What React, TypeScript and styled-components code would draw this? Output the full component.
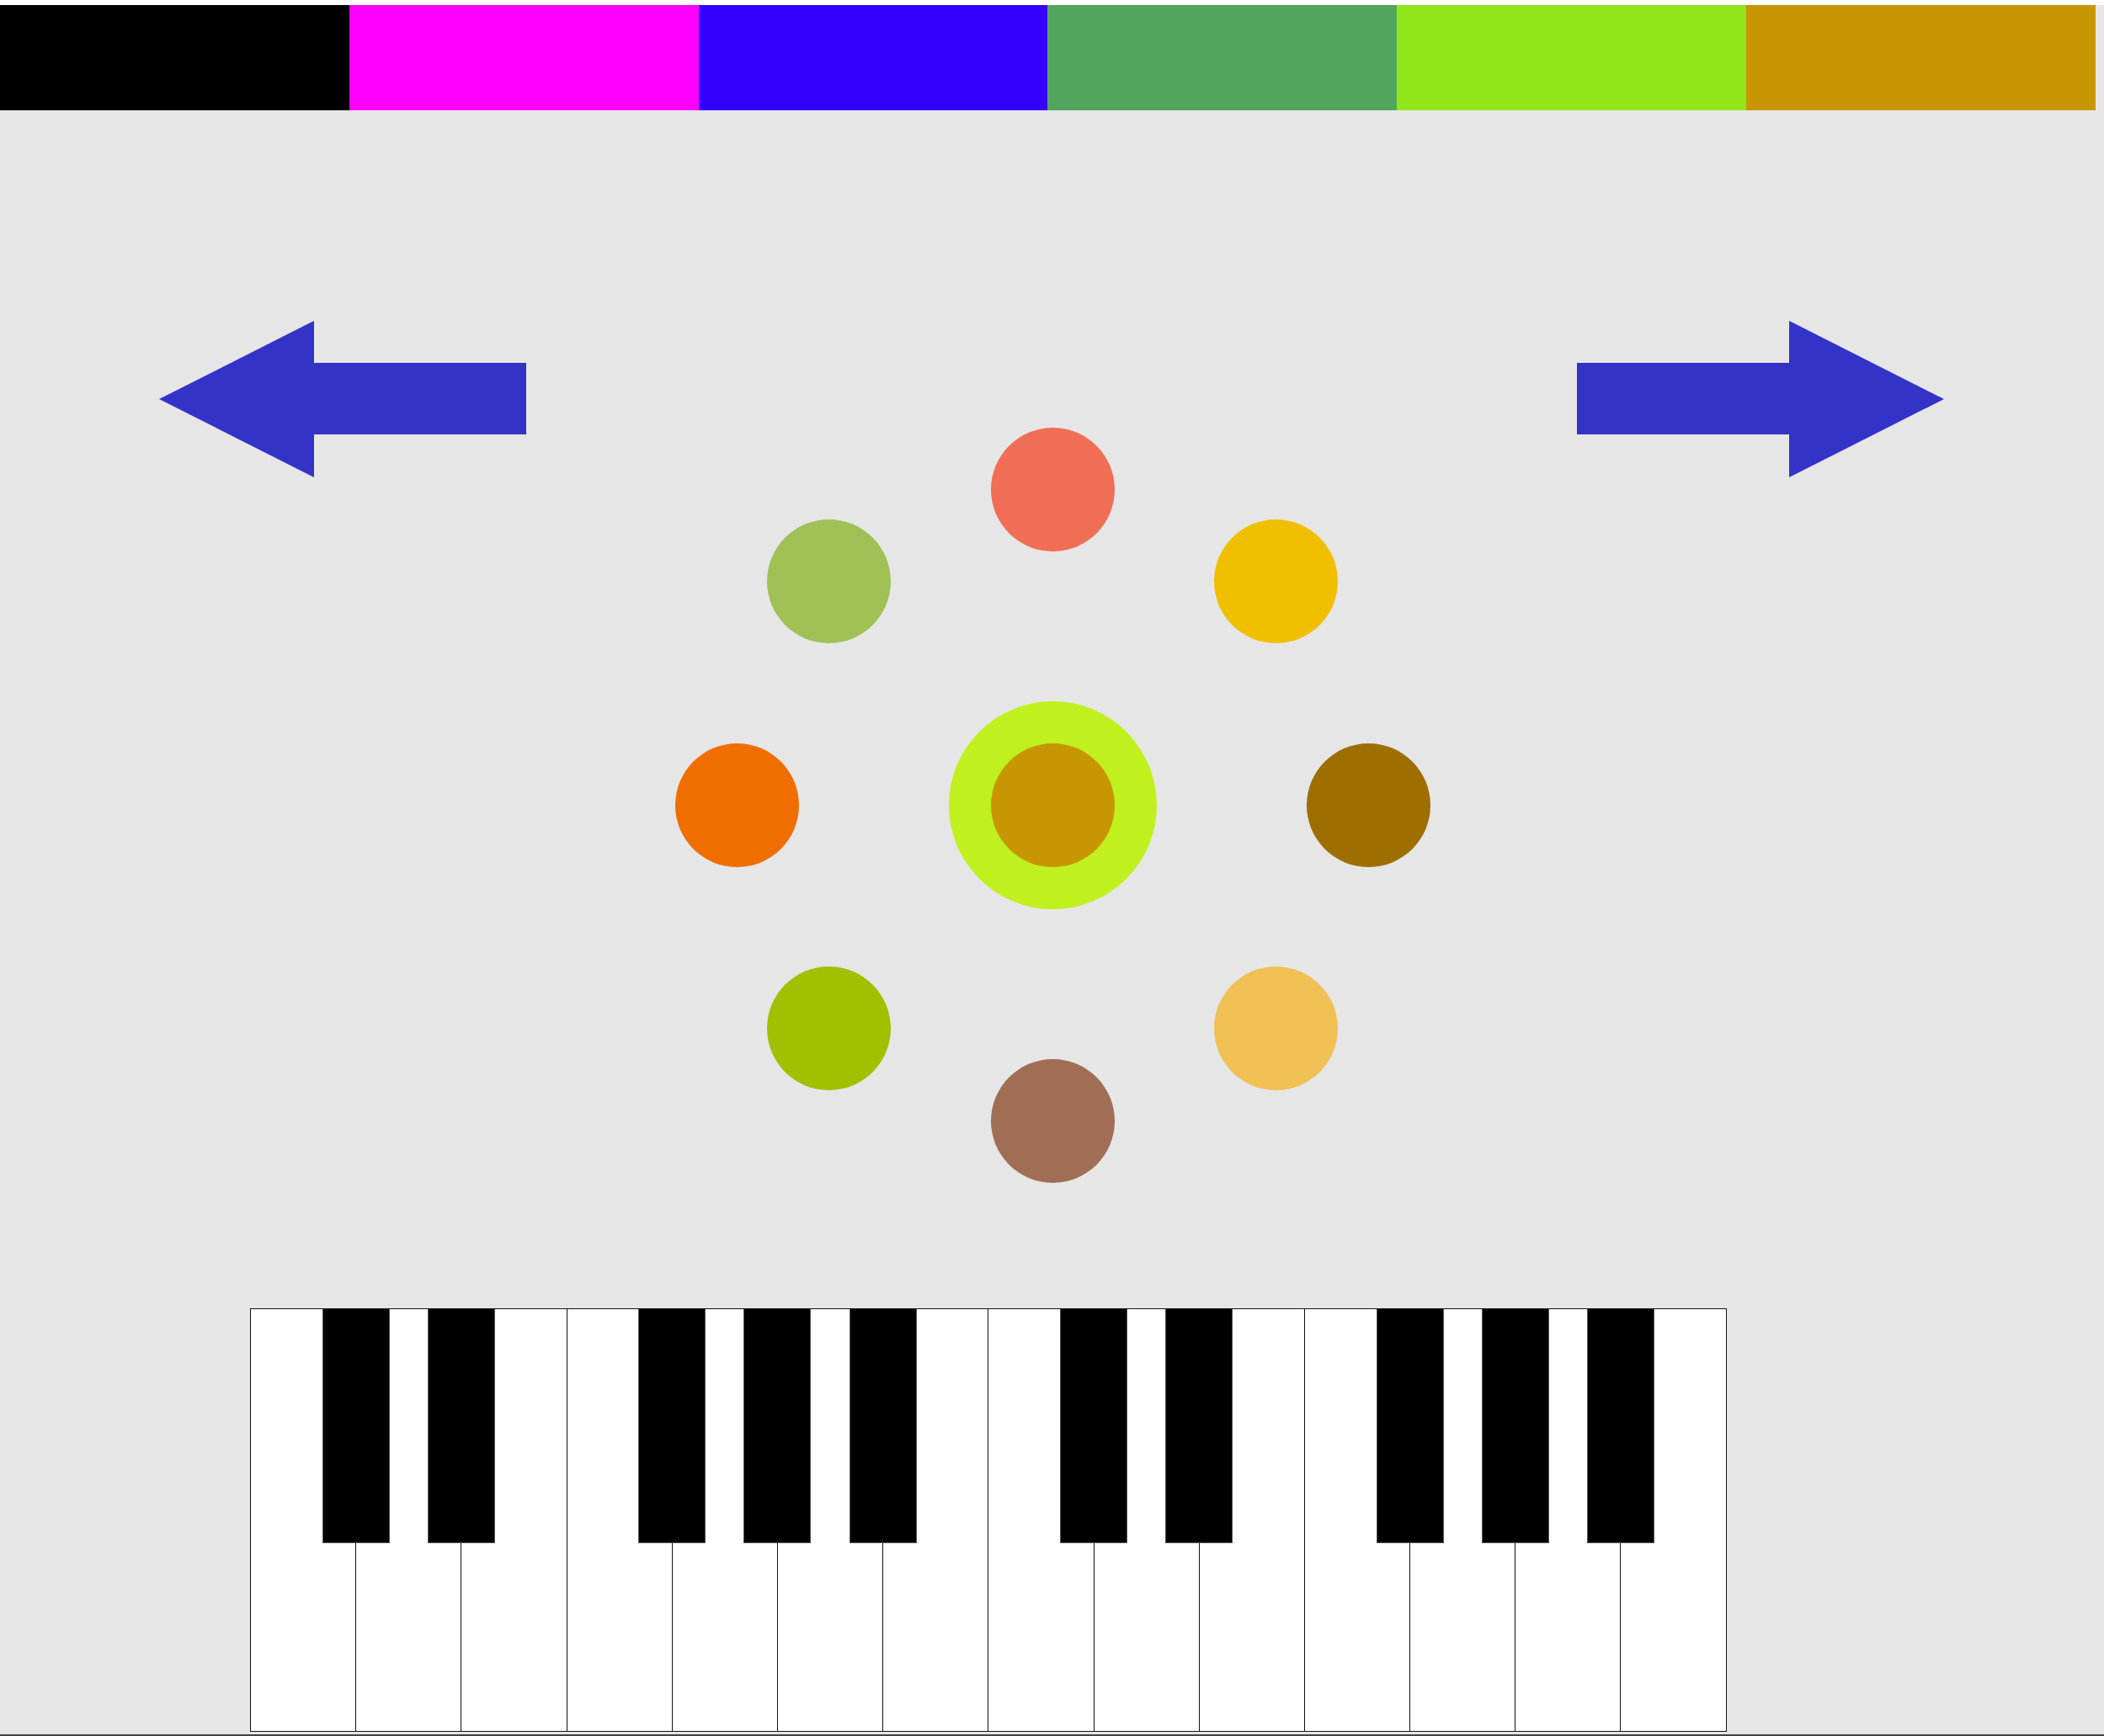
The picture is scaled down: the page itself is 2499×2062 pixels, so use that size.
import React from 'react';
import styled, {createGlobalStyle} from 'styled-components';

const GlobalStyle = createGlobalStyle`
  html, body {
    margin: 0;
    padding: 0;
    background: #FFFFFF;
    font-family: 'Liberation Sans', Arial, sans-serif;
  }
`;

const swatches = ['#000000', '#FF00FF', '#3300FF', '#52A55D', '#91E61A', '#C89600'];

const wheelColors = [
    '#F06E55', // top
    '#F0C000', // upper right
    '#9E6E00', // right
    '#F0C055', // lower right
    '#A06E55', // bottom
    '#A0C000', // lower left
    '#F06E00', // left
    '#A0C055', // upper left
];

const WHEEL_SIZE = 896;
const WHEEL_RADIUS = 375;
const DOT = 147;

const whiteKeys = ['C', 'D', 'E', 'F', 'G', 'A', 'B', 'C', 'D', 'E', 'F', 'G', 'A', 'B'];
const hasBlack = (note: string) => note !== 'E' && note !== 'B';

const Arrow = ({flip}: {flip?: boolean}) => (
    <svg width="436" height="186" viewBox="0 0 436 186"
         style={flip ? {transform: 'scaleX(-1)'} : undefined}>
        <polygon points="0,93 184,0 184,50 436,50 436,135 184,135 184,186" fill="#3333C8"/>
    </svg>
);

export default function App() {
    return (
        <>
            <GlobalStyle/>
            <Stage>
                <ColorBar>
                    {swatches.map((c, i) => <Swatch key={i} $color={c}/>)}
                </ColorBar>

                <Middle>
                    <ArrowCell $side="left">
                        <Arrow/>
                    </ArrowCell>

                    <Wheel>
                        {wheelColors.map((c, i) => {
                            const a = (i * Math.PI) / 4;
                            const x = WHEEL_SIZE / 2 + Math.sin(a) * WHEEL_RADIUS - DOT / 2;
                            const y = WHEEL_SIZE / 2 - Math.cos(a) * WHEEL_RADIUS - DOT / 2;
                            return <Dot key={i} $color={c} style={{left: x, top: y}}/>;
                        })}
                        <Hub>
                            <HubCore/>
                        </Hub>
                    </Wheel>

                    <ArrowCell $side="right">
                        <Arrow flip/>
                    </ArrowCell>
                </Middle>

                <Piano>
                    {whiteKeys.map((note, i) => (
                        <WhiteKey key={i}>
                            {i < whiteKeys.length - 1 && hasBlack(note) && <BlackKey/>}
                        </WhiteKey>
                    ))}
                </Piano>
            </Stage>
        </>
    );
}

const Stage = styled.div`
  margin-top: 6px;
  height: 2054px;
  background: #E6E6E6;
  border-bottom: 2px solid #444444;
  overflow: hidden;
  display: flex;
  flex-direction: column;
`

const ColorBar = styled.div`
  display: flex;
  width: 2489px;
  height: 125px;
  flex-shrink: 0;
`

const Swatch = styled.div<{ $color: string }>`
  flex: 1;
  background: ${p => p.$color};
`

const Middle = styled.div`
  display: grid;
  grid-template-columns: 802px ${WHEEL_SIZE}px 1fr;
  align-items: start;
`

const ArrowCell = styled.div<{ $side: 'left' | 'right' }>`
  display: flex;
  padding-top: 250px;
  padding-left: ${p => (p.$side === 'left' ? '189px' : '175px')};
`

const Wheel = styled.div`
  position: relative;
  width: ${WHEEL_SIZE}px;
  height: ${WHEEL_SIZE}px;
  margin-top: 377px;
  display: flex;
  align-items: center;
  justify-content: center;
`

const Dot = styled.div<{ $color: string }>`
  position: absolute;
  width: ${DOT}px;
  height: ${DOT}px;
  border-radius: 50%;
  background: ${p => p.$color};
`

const Hub = styled.div`
  width: 247px;
  height: 247px;
  border-radius: 50%;
  background: #C0F01E;
  display: flex;
  align-items: center;
  justify-content: center;
`

const HubCore = styled.div`
  width: ${DOT}px;
  height: ${DOT}px;
  border-radius: 50%;
  background: #C89600;
`

const Piano = styled.div`
  display: flex;
  align-self: flex-start;
  margin: 150px 0 0 297px;
  height: 501px;
  border: 1px solid #111111;
  border-right: none;
  background: #FFFFFF;
`

const WhiteKey = styled.div`
  position: relative;
  width: 124.2px;
  height: 100%;
  background: #FFFFFF;
  border-right: 1px solid #111111;
`

const BlackKey = styled.div`
  position: absolute;
  top: 0;
  right: -40.5px;
  z-index: 1;
  width: 78px;
  height: 277px;
  background: #000000;
  border: 1px solid #555555;
  border-top: none;
`
